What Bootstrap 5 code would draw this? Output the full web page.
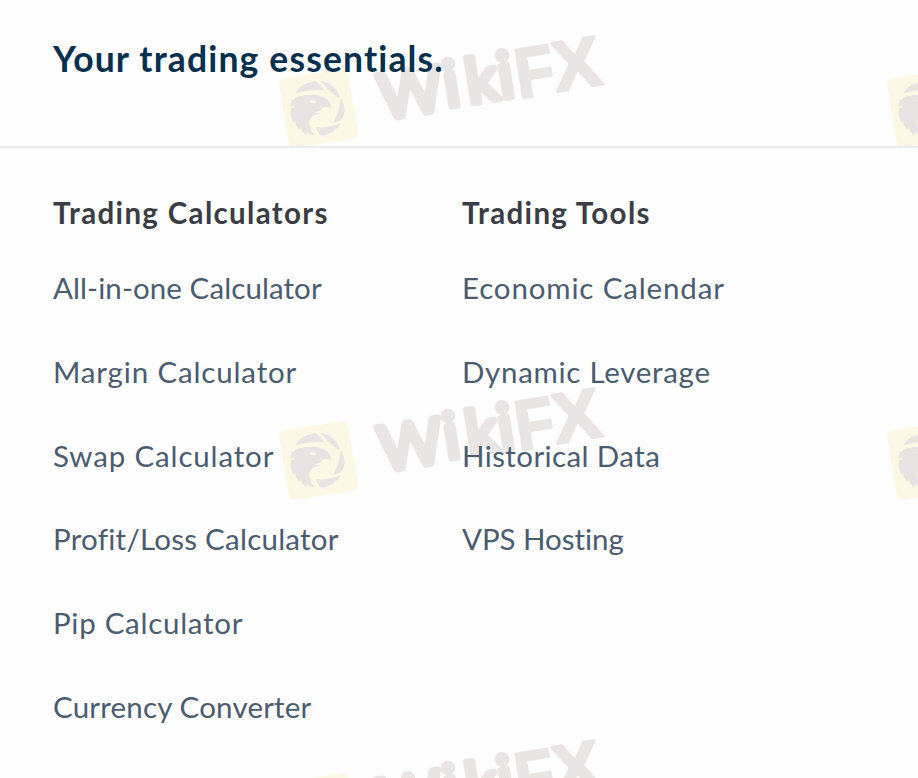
<!DOCTYPE html>
<html lang="en">
<head>
<meta charset="utf-8">
<meta name="viewport" content="width=device-width, initial-scale=1">
<title>Your trading essentials</title>
<link href="https://cdn.jsdelivr.net/npm/bootstrap@5.3.0/dist/css/bootstrap.min.css" rel="stylesheet">
<style>
body{font-family:Lato,"Liberation Sans",sans-serif;background:#fefefe;height:778px}
.page-head{height:148px;padding:34px 53px 0;border-bottom:2px solid #ebebeb}
.page-head h1{font-size:35.5px;line-height:50px;color:#06304e;letter-spacing:1.15px}
.menu{padding:45px 0 0 53px}
.menu-col{width:409px}
.menu h2{font-size:29.5px;line-height:40px;margin-bottom:19px;color:#3a3d44;letter-spacing:1.33px}
.menu a{font-size:29.5px;line-height:40px;height:83.8px;padding-top:21px;color:#4a5c70;display:block}
.menu a,.menu h2,.page-head h1{white-space:nowrap}
.menu ul{margin-top:-21px}
.menu .track-0{letter-spacing:-.05px}
.menu .track-1{letter-spacing:.09px}
.menu .track-2{letter-spacing:.18px}
.menu .track-3{letter-spacing:.24px}
.menu .track-4{letter-spacing:.4px}
.menu .track-7{letter-spacing:.72px}
.menu .track-8{letter-spacing:.85px}
.marks{z-index:-1}
</style>
</head>
<body class="position-relative overflow-hidden">
<svg class="marks position-absolute top-0 start-0" width="918" height="778" aria-hidden="true">
<defs>
<g id="emblem">
<rect x="283.5" y="73.5" width="70" height="70" rx="5" transform="rotate(-9.3 318.5 108.5)" fill="#fdf7e5"/>
<g transform="translate(270 20) scale(.33333)" fill="#e9e3e4">
<path d="M75 220Q95 188 137 183L164 210Q120 207 75 220Z"/>
<path d="M151 182Q190 187 208 226L209 235Q180 216 151 182Z"/>
<path d="M213 234Q232 270 217 296Q207 306 191 308Q207 275 213 234Z"/>
<path d="M138 322Q175 325 215 309Q187 346 151 347Q143 337 138 322Z"/>
<path d="M67 240Q90 225 112 225Q149 222 171 238Q184 248 181 265Q169 258 157 263Q150 276 131 276L149 281Q126 283 119 300Q113 320 134 347Q119 345 109 334L110 345Q97 339 90 321L90 330Q76 319 75 302L70 308Q59 286 63 266L75 258L61 260Q61 249 67 240ZM116 241L124 249L138 248L137 242Z" fill-rule="evenodd"/>
</g></g>
<g id="watermark"><use href="#emblem"/>
<g transform="translate(524 98) rotate(-9)" fill="#e9e5e5" stroke="#e9e5e5" stroke-linejoin="round" font-family="Lato,sans-serif">
<g font-size="62" font-weight="400" stroke-width="6.5">
<text x="-143" y="-1" textLength="64" lengthAdjust="spacingAndGlyphs">W</text>
<text x="-77.5" y="-3" font-size="64">i</text><text x="-55" y="-3">k</text><text x="-22.5" y="-3" font-size="64">i</text></g>
<g font-family="'Liberation Sans',sans-serif" font-size="71" font-weight="700" stroke-width="2.5">
<text x="-5" y="0" textLength="39" lengthAdjust="spacingAndGlyphs">F</text>
<text x="33" y="-1" textLength="48" lengthAdjust="spacingAndGlyphs">X</text></g>
</g></g>
</defs>
<use href="#watermark"/><use href="#watermark" y="352"/><use href="#watermark" y="704"/>
<use href="#emblem" x="608"/><use href="#emblem" x="608" y="352"/>
</svg>
<header class="page-head"><h1 class="fw-bold m-0">Your trading essentials.</h1></header>
<main class="menu d-flex">
<section class="menu-col"><h2 class="fw-bold mt-0">Trading Calculators</h2>
<ul class="list-unstyled mb-0 pt-3">
<li><a class="text-decoration-none track-1" href="#">All-in-one Calculator</a></li>
<li><a class="text-decoration-none track-8" href="#">Margin Calculator</a></li>
<li><a class="text-decoration-none track-8" href="#">Swap Calculator</a></li>
<li><a class="text-decoration-none track-3" href="#">Profit/Loss Calculator</a></li>
<li><a class="text-decoration-none track-7" href="#">Pip Calculator</a></li>
<li><a class="text-decoration-none track-2" href="#">Currency Converter</a></li>
</ul></section>
<section class="menu-col"><h2 class="fw-bold mt-0">Trading Tools</h2>
<ul class="list-unstyled mb-0 pt-3">
<li><a class="text-decoration-none track-8" href="#">Economic Calendar</a></li>
<li><a class="text-decoration-none track-7" href="#">Dynamic Leverage</a></li>
<li><a class="text-decoration-none track-4" href="#">Historical Data</a></li>
<li><a class="text-decoration-none track-0" href="#">VPS Hosting</a></li>
</ul></section>
</main>
<script src="https://cdn.jsdelivr.net/npm/bootstrap@5.3.0/dist/js/bootstrap.bundle.min.js"></script>
</body>
</html>
